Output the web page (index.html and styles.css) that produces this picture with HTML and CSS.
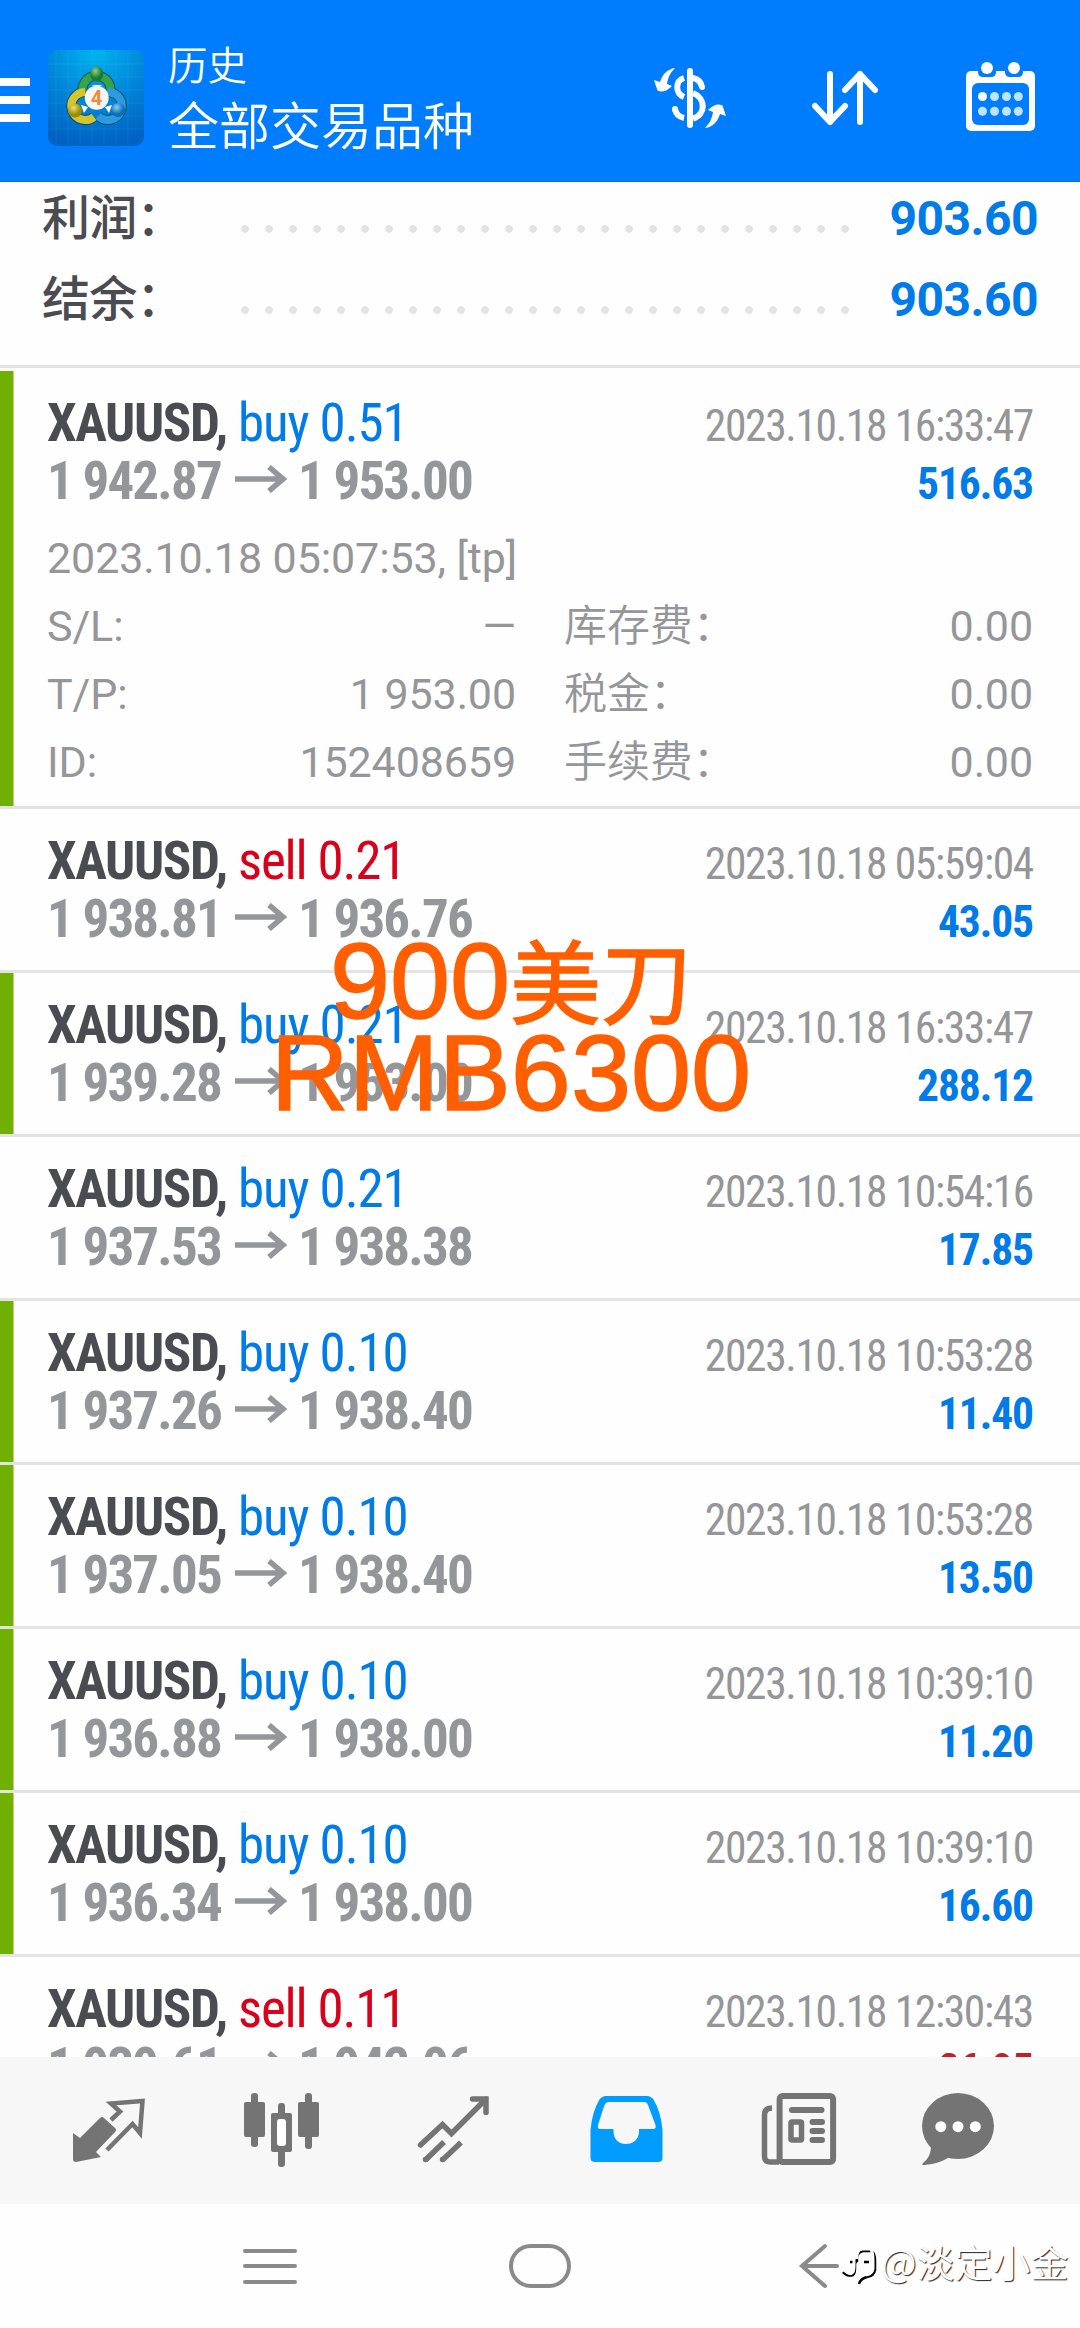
FILE: index.html
```
<!DOCTYPE html>
<html lang="zh-CN">
  <head>
    <meta charset="utf-8">
    <title>历史</title>
    <link rel="stylesheet" href="styles.css">
  </head>
  <body>
  <div class="app">

    <header class="topbar">
      <svg class="menu" width="30" height="48" fill="#fff">
        <rect y="4" width="30" height="8"/><rect y="22" width="30" height="8"/><rect y="40" width="30" height="8"/>
      </svg>
      <svg class="logo" width="96" height="96" viewBox="0 0 96 96">
        <defs>
          <radialGradient id="bg" cx=".5" cy="0" r="1"><stop offset="0" stop-color="#00b4f0"/><stop offset=".55" stop-color="#0084d8"/><stop offset="1" stop-color="#0062c4"/></radialGradient>
          <radialGradient id="green" cx=".4" cy=".3"><stop offset="0" stop-color="#8fd08a"/><stop offset="1" stop-color="#177a2c"/></radialGradient>
          <radialGradient id="yellow" cx=".4" cy=".3"><stop offset="0" stop-color="#f0e46a"/><stop offset="1" stop-color="#9a8c08"/></radialGradient>
          <radialGradient id="blue" cx=".4" cy=".3"><stop offset="0" stop-color="#84d0f5"/><stop offset="1" stop-color="#0b6db5"/></radialGradient>
        </defs>
        <rect width="96" height="96" rx="9" fill="url(#bg)"/>
        <path d="M8 0V96M20 0V96M32 0V96M44 0V96M56 0V96M68 0V96M80 0V96M0 14H96M0 27H96M0 40H96M0 53H96M0 66H96M0 79H96" stroke="#fff" stroke-opacity=".06"/>
        <g fill="none" stroke-width="10" stroke="#0a4f63">
          <path d="M36 46A14 14 0 1 1 61 46"/><path d="M46 67A14 14 0 1 1 37 42"/><path d="M60 42A14 14 0 1 1 50 66"/>
        </g>
        <path d="M36 46A14 14 0 1 1 61 46" fill="none" stroke="#35a34a" stroke-width="8"/>
        <path d="M46 67A14 14 0 1 1 37 42" fill="none" stroke="#d3c52a" stroke-width="8"/>
        <path d="M60 42A14 14 0 1 1 50 66" fill="none" stroke="#2a9be0" stroke-width="8"/>
        <path d="M33 55L40 57L36 63ZM64 55L57 57L61 63ZM44 35L54 35L49 38Z" fill="#fff"/>
        <ellipse cx="48.700" cy="24" rx="6.500" ry="7.500" fill="url(#green)"/>
        <circle cx="27" cy="60.500" r="7" fill="url(#yellow)"/>
        <circle cx="70" cy="60" r="7" fill="url(#blue)"/>
        <circle cx="48.700" cy="47.700" r="12" fill="#f8f6f2"/>
        <text class="logo-num" x="48.500" y="55" text-anchor="middle">4</text>
      </svg>
      <div class="titles">
        <div class="sub">历史</div>
        <div class="main-title">全部交易品种</div>
      </div>
      <div class="actions">
        <svg width="80" height="80" viewBox="0 0 80 80" fill="none" stroke="#fff" stroke-width="6">
          <path d="M40 13V67" stroke-linecap="round"/>
          <path d="M34 20C25 23 25 35 34 39M34 60C29 59 26 56 25 51"/>
          <path d="M43 20C48 21 51 24 52 29" stroke-linecap="round"/>
          <path d="M25 51L25 51.500" stroke-linecap="round"/>
          <path d="M43 35C56 40 56 57 43 60.500"/>
          <path id="swap" d="M25 10C17 11 12 17 10 24L4 22L7.500 32.500Q14 36 22 28L17 26Q18 17 25 10Z" fill="#fff" stroke="none"/>
          <use href="#swap" transform="rotate(180 40 40)"/>
        </svg>
        <svg width="80" height="80" viewBox="0 0 80 80" fill="none" stroke="#fff" stroke-width="6" stroke-linecap="round" stroke-linejoin="round">
          <path d="M25 16V64M10 48L25 64L40 48M55 64V16M40 32L55 16L70 32"/>
        </svg>
        <svg width="80" height="80" viewBox="0 0 80 80">
          <rect x="6" y="13" width="69" height="60" rx="5" fill="#fff"/>
          <rect x="12" y="25" width="57" height="42" rx="6" fill="#007dff"/>
          <path d="M18 12H36V14Q36 19 31 19H23Q18 19 18 14ZM45 12H63V14Q63 19 58 19H50Q45 19 45 14Z" fill="#007dff"/>
          <g fill="#fff"><circle cx="27" cy="10" r="6"/><circle cx="54" cy="10" r="6"/><circle cx="22.500" cy="38.500" r="4.500"/></g>
          <g fill="#bfe4ff"><circle cx="34.500" cy="38.500" r="4.500"/><circle cx="46.500" cy="38.500" r="4.500"/><circle cx="58.300" cy="38.500" r="4.500"/><circle cx="22.500" cy="53.300" r="4.500"/><circle cx="34.500" cy="53.300" r="4.500"/><circle cx="46.500" cy="53.300" r="4.500"/><circle cx="58.300" cy="53.300" r="4.500"/></g>
        </svg>
      </div>
    </header>

    <main class="history">
      <div class="summary">
        <div class="sum-row"><span class="sum-label">利润：</span><i class="dots"></i><span class="sum-value">903.60</span></div>
        <div class="sum-row"><span class="sum-label">结余：</span><i class="dots"></i><span class="sum-value">903.60</span></div>
      </div>

      <div class="deal tp open">
        <div class="line"><span class="sym">XAUUSD,</span><span class="buy">buy 0.51</span><span class="time">2023.10.18 16:33:47</span></div>
        <div class="line price"><span>1 942.87</span><svg class="arrow" viewBox="0 0 52 28"><path d="M0 14H48M34 2L48 14L34 26"/></svg><span>1 953.00</span><span class="profit">516.63</span></div>
        <div class="details">
          <div class="comment">2023.10.18 05:07:53, [tp]</div>
          <span>S/L:</span><span class="val">—</span><span class="cn">库存费：</span><span class="val">0.00</span>
          <span>T/P:</span><span class="val">1 953.00</span><span class="cn">税金：</span><span class="val">0.00</span>
          <span>ID:</span><span class="val">152408659</span><span class="cn">手续费：</span><span class="val">0.00</span>
        </div>
      </div>
      <div class="deal">
        <div class="line"><span class="sym">XAUUSD,</span><span class="sell">sell 0.21</span><span class="time">2023.10.18 05:59:04</span></div>
        <div class="line price"><span>1 938.81</span><svg class="arrow" viewBox="0 0 52 28"><path d="M0 14H48M34 2L48 14L34 26"/></svg><span>1 936.76</span><span class="profit">43.05</span></div>
      </div>
      <div class="deal tp">
        <div class="line"><span class="sym">XAUUSD,</span><span class="buy">buy 0.21</span><span class="time">2023.10.18 16:33:47</span></div>
        <div class="line price"><span>1 939.28</span><svg class="arrow" viewBox="0 0 52 28"><path d="M0 14H48M34 2L48 14L34 26"/></svg><span>1 953.00</span><span class="profit">288.12</span></div>
      </div>
      <div class="deal">
        <div class="line"><span class="sym">XAUUSD,</span><span class="buy">buy 0.21</span><span class="time">2023.10.18 10:54:16</span></div>
        <div class="line price"><span>1 937.53</span><svg class="arrow" viewBox="0 0 52 28"><path d="M0 14H48M34 2L48 14L34 26"/></svg><span>1 938.38</span><span class="profit">17.85</span></div>
      </div>
      <div class="deal tp">
        <div class="line"><span class="sym">XAUUSD,</span><span class="buy">buy 0.10</span><span class="time">2023.10.18 10:53:28</span></div>
        <div class="line price"><span>1 937.26</span><svg class="arrow" viewBox="0 0 52 28"><path d="M0 14H48M34 2L48 14L34 26"/></svg><span>1 938.40</span><span class="profit">11.40</span></div>
      </div>
      <div class="deal tp">
        <div class="line"><span class="sym">XAUUSD,</span><span class="buy">buy 0.10</span><span class="time">2023.10.18 10:53:28</span></div>
        <div class="line price"><span>1 937.05</span><svg class="arrow" viewBox="0 0 52 28"><path d="M0 14H48M34 2L48 14L34 26"/></svg><span>1 938.40</span><span class="profit">13.50</span></div>
      </div>
      <div class="deal tp">
        <div class="line"><span class="sym">XAUUSD,</span><span class="buy">buy 0.10</span><span class="time">2023.10.18 10:39:10</span></div>
        <div class="line price"><span>1 936.88</span><svg class="arrow" viewBox="0 0 52 28"><path d="M0 14H48M34 2L48 14L34 26"/></svg><span>1 938.00</span><span class="profit">11.20</span></div>
      </div>
      <div class="deal tp">
        <div class="line"><span class="sym">XAUUSD,</span><span class="buy">buy 0.10</span><span class="time">2023.10.18 10:39:10</span></div>
        <div class="line price"><span>1 936.34</span><svg class="arrow" viewBox="0 0 52 28"><path d="M0 14H48M34 2L48 14L34 26"/></svg><span>1 938.00</span><span class="profit">16.60</span></div>
      </div>
      <div class="deal">
        <div class="line"><span class="sym">XAUUSD,</span><span class="sell">sell 0.11</span><span class="time">2023.10.18 12:30:43</span></div>
        <div class="line price"><span>1 939.61</span><svg class="arrow" viewBox="0 0 52 28"><path d="M0 14H48M34 2L48 14L34 26"/></svg><span>1 942.06</span><span class="profit loss">-26.95</span></div>
      </div>
    </main>

    <nav class="tabs">
      <!-- quotes -->
      <svg viewBox="0 0 80 80">
        <path d="M4 43L11 48L31 28Q33 26 35 28L46 38Q48 40 46 42L27 62L32 67L7 72Q4 72 4 69Z" fill="#747474"/>
        <path d="M42 30L51 21.500L42 13.500L73.500 11L71 43L63.500 34L38 60" fill="none" stroke="#747474" stroke-width="4.500"/>
      </svg>
      <!-- chart -->
      <svg viewBox="0 0 80 80" fill="#747474">
        <rect x="2" y="12" width="21" height="35" rx="2"/><rect x="9" y="3" width="7" height="54" rx="3"/>
        <rect x="56" y="12" width="21" height="35" rx="2"/><rect x="63" y="3" width="7" height="56" rx="3"/>
        <rect x="29" y="23" width="21" height="39" rx="2"/><rect x="36" y="13" width="7" height="64" rx="3"/>
        <rect x="35" y="29" width="9" height="27" rx="3" fill="#fff"/>
      </svg>
      <!-- trade -->
      <svg viewBox="0 0 80 80" fill="none" stroke="#747474" stroke-width="5.500">
        <path d="M6.500 55L28.500 34.500L37.500 43.500L72 9M58.500 9H72V22.500" stroke-linecap="round"/>
        <path d="M11.500 70L30 52M28.500 70L47 52.500"/>
        <path d="M11.500 69.500V69.500M28.500 69.500V69.500" stroke-linecap="round"/>
      </svg>
      <!-- history -->
      <svg viewBox="0 0 80 80" fill="#009cff">
        <path fill-rule="evenodd" d="M3.500 40Q5 22 12.500 9.500Q15 6 19 6H60Q64 6 66.500 9.500Q74 22 75.500 40V68Q75.500 72 71 72H8Q3.500 72 3.500 68ZM22 12Q19 12 17.500 15L11 35Q10 39 13.500 39H26.500V42C27 50 32 54 39 54S51.500 50 52 42V39H66Q69.500 39 68.500 35L61 15Q60 12 57 12Z"/>
      </svg>
      <!-- news -->
      <svg viewBox="0 0 80 80" fill="none" stroke="#747474" stroke-width="6">
        <rect x="20.600" y="6" width="53.500" height="66" rx="3"/>
        <path d="M13 18Q5.500 18 5.500 25V66Q5.500 72 11 72H20" stroke-width="5.500"/>
        <path d="M33 20H62.500M53.500 32H63M53.500 41H63M53.500 50H63" stroke-linecap="round"/>
        <rect x="32" y="32" width="10.500" height="18" rx="1" stroke-width="5.500"/>
      </svg>
      <!-- chat -->
      <svg viewBox="0 0 80 80">
        <ellipse cx="40" cy="36" rx="36" ry="33" fill="#747474"/>
        <path d="M10 52L13 58Q12 68 5 73Q3 75 6 75Q20 74 30 68L40 60Z" fill="#747474"/>
        <g fill="#fff"><circle cx="22.800" cy="36.700" r="5.500"/><circle cx="40" cy="36.700" r="5.500"/><circle cx="57.300" cy="36.700" r="5.500"/></g>
      </svg>
    </nav>

    <footer class="sysnav">
      <svg width="54" height="46" viewBox="0 0 54 46"><path d="M2 8H52M2 23H52M2 39H52"/></svg>
      <svg class="home" width="64" height="46" viewBox="0 0 64 46"><rect x="3" y="3" width="58" height="40" rx="20"/></svg>
      <svg width="44" height="46" viewBox="0 0 44 46"><path d="M27 3L4 23L27 43M4 23H39"/></svg>
    </footer>

    <div class="caption">900<span class="caption-cn">美刀</span><br>RMB6300</div>

    <div class="watermark">
      <svg width="40" height="44" viewBox="0 0 40 44" fill="none">
        <path d="M2 31Q7 36 12 34Q14 33 14 27V18M9 21H16M16 21Q15 11 22 10H30Q34 11 34 20V29Q33 35 26 36Q19 38 18 43M23 21H28" stroke="#000" stroke-width="2.500"/>
        <path d="M3 29Q8 34 11 32Q13 31 13 25V17M16 18Q15 9 21 8H30Q32 12 32 20V28Q31 33 25 34" stroke="#fff" stroke-width="3"/>
      </svg>
      <span>@淡定小金</span>
    </div>
  </div>
  </body>
</html>
```

FILE: styles.css
```
body {
  margin: 0;
  background: #fefefe;
  font-family: Roboto, "Noto Sans CJK SC", sans-serif;
}
.app {
  position: relative;
  width: 1080px;
  height: 2328px;
  overflow: hidden;
  display: flex;
  flex-direction: column;
}
svg { display: block; flex: none; }

/* top bar */
.topbar {
  height: 182px;
  box-sizing: border-box;
  padding: 14px 40px 0 0;
  background: #007dff;
  border-bottom: 1px solid #0070e0;
  color: #fff;
  display: flex;
  align-items: center;
}
.logo { margin-left: 18px; }
.logo-num { font: 700 20px Roboto, sans-serif; fill: #f08a3c; }
.titles { margin-left: 24px; font-weight: 350; }
.sub { font-size: 39.500px; line-height: 60px; }
.main-title { font-size: 51px; line-height: 61px; }
.actions { margin-left: auto; display: flex; gap: 75px; }

/* list */
.history { height: 1875px; overflow: hidden; }
.summary {
  margin-top: -4px;
  padding: 0 42px 25px;
  border-bottom: 3px solid #e3e3e3;
  margin-bottom: 3px;
  color: #4b4b52;
  font-size: 48px;
}
.sum-row { display: flex; align-items: baseline; height: 81px; line-height: 81px; }
.sum-label {
  width: 191px;
  font-family: "Noto Sans CJK SC", sans-serif;
  font-weight: 500;
  line-height: 72px;
  letter-spacing: -0.700px;
}
.dots {
  width: 624px;
  height: 8px;
  margin-top: 47px;
  align-self: flex-start;
  background: radial-gradient(circle at center, #e3e3e3 3.500px, transparent 4.200px) 0 0 / 24px 8px;
}
.sum-value { margin-left: auto; color: #007be8; font-weight: 700; letter-spacing: -0.500px; }

.deal {
  height: 138px;
  padding: 23px 47px 0;
  border-bottom: 3px solid #e3e3e3;
  color: #949699;
}
.deal.open { height: 412px; }
.deal.tp { background: linear-gradient(#6fb000, #6fb000) 0 0 / 13.500px 100% no-repeat; background-clip: padding-box; }
.line {
  display: flex;
  align-items: baseline;
  height: 58px;
  line-height: 58px;
  font-size: 53px;
  font-stretch: 75%;
  white-space: pre;
}
.sym { width: 191px; color: #4b4b52; font-weight: 700; letter-spacing: -1.400px; }
.buy { color: #007be8; letter-spacing: -1.100px; }
.sell { color: #d9001b; letter-spacing: -1.200px; }
.time { margin-left: auto; font-size: 43.500px; letter-spacing: -1.350px; }
.price { font-weight: 700; letter-spacing: -1.800px; }
.price span:first-child { width: 188px; }
.arrow {
  width: 52px;
  height: 28px;
  margin: 0 11px 5px 0;
  align-self: center;
  fill: none;
  stroke: #949699;
  stroke-width: 5.500px;
}
.profit { margin-left: auto; color: #007be8; font-size: 43.500px; letter-spacing: -1.100px; }
.loss { color: #c0202a; }

.details {
  margin-top: 14px;
  display: grid;
  grid-template-columns: 150px 319px 240px 1fr;
  line-height: 68px;
  font-size: 43px;
  letter-spacing: -0.100px;
}
.comment { grid-column: 1 / 5; }
.val { text-align: right; }
.cn { padding-left: 48px; font-weight: 350; }

/* bottom bars */
.tabs {
  height: 147px;
  box-sizing: border-box;
  padding: 33px 69px 0;
  background: #f7f7f7;
  display: flex;
  gap: 92.500px;
}
.tabs svg { width: 80px; height: 80px; }
.tabs svg:last-child { margin-left: -14px; }
.sysnav {
  height: 124px;
  padding-left: 243px;
  display: flex;
  align-items: center;
}
.sysnav svg { fill: none; stroke: #8a8a8a; stroke-width: 4px; stroke-linecap: round; }
.home { margin: 0 226px 0 211px; }

/* text laid over the list */
.caption {
  position: absolute;
  left: 0;
  top: 935px;
  width: 1022px;
  text-align: center;
  color: #ff5f00;
  font: 108px/92px "Liberation Sans", sans-serif;
  -webkit-text-stroke: 1.500px #ff5f00;
}
.caption-cn {
  font-family: "Noto Sans CJK SC", sans-serif;
  font-size: 91px;
  line-height: 0;
  vertical-align: 1px;
}
.watermark {
  position: absolute;
  left: 841px;
  top: 2240px;
  display: flex;
  align-items: center;
  gap: 0;
  color: #fff;
  font: 350 38px/48px "Noto Sans CJK SC", sans-serif;
  text-shadow: 1px 1px 1px #222;
}
.watermark span { margin-top: -3px; }
```
